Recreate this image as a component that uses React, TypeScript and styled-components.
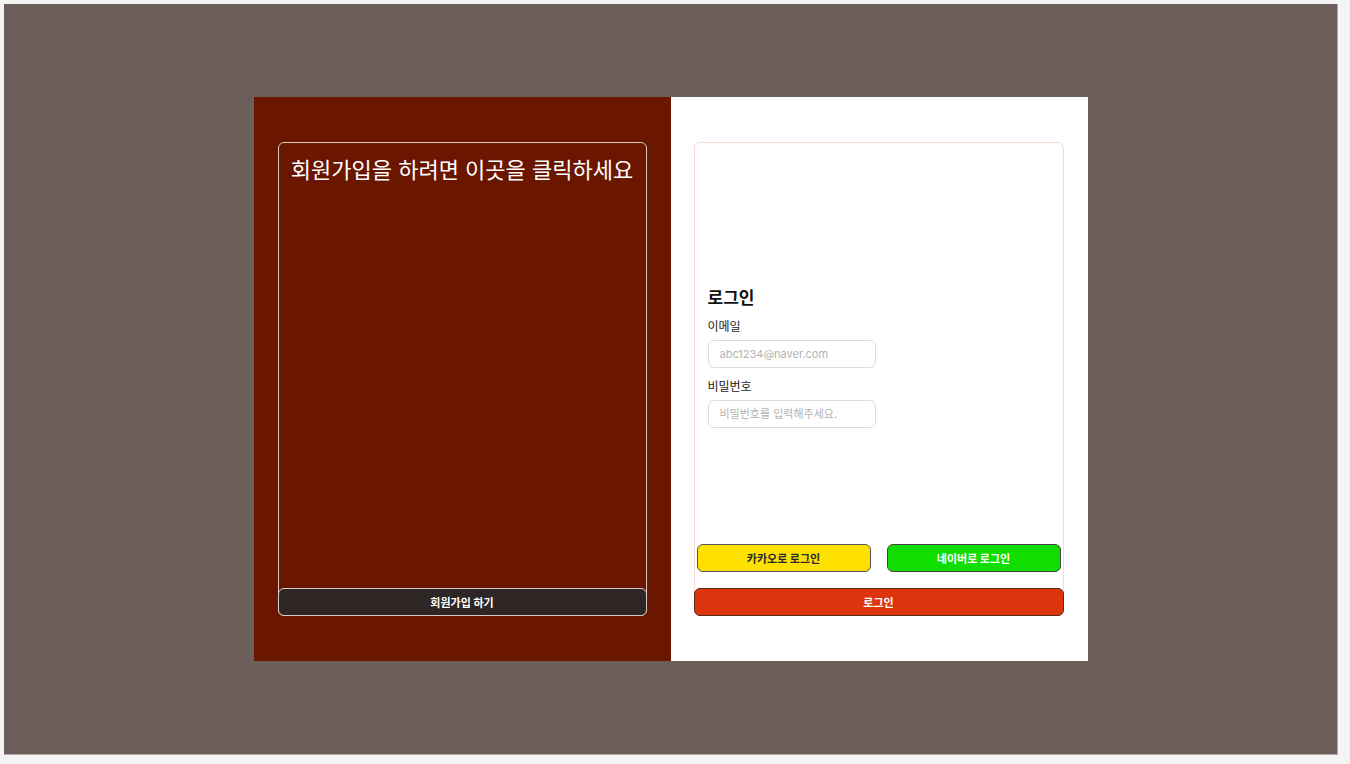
import React from 'react';
import styled, { createGlobalStyle } from 'styled-components';

const colors = {
  page: '#f4f4f4',
  backdrop: '#6b5e5b',
  wine: '#6a1600',
  signupBtn: '#2e2625',
  kakao: '#ffe100',
  naver: '#10dd00',
  login: '#dc350e',
  line: '#dcdcdc',
};

const GlobalStyle = createGlobalStyle`
  html, body {
    margin: 0;
    padding: 0;
    background: ${colors.page};
    font-family: 'Inter', 'Noto Sans CJK KR', sans-serif;
  }
  * {
    box-sizing: border-box;
  }
`;

const Backdrop = styled.div`
  margin: 4px;
  width: 1334px;
  height: 751px;
  background: ${colors.backdrop};
  border-right: 1px solid #b4a9a7;
  border-bottom: 1px solid #b4a9a7;
  display: flex;
  align-items: center;
  justify-content: center;
`;

const Card = styled.div`
  width: 834px;
  height: 564px;
  display: grid;
  grid-template-columns: 417px 417px;
`;

const Half = styled.section<{ $tone: 'dark' | 'light' }>`
  background: ${(p) => (p.$tone === 'dark' ? colors.wine : '#ffffff')};
  padding: 45px 24px 45px ${(p) => (p.$tone === 'dark' ? '24px' : '23px')};
  display: flex;
`;

const Frame = styled.div<{ $border: string }>`
  flex: 1;
  border: 1px solid ${(p) => p.$border};
  border-radius: 6px;
  display: flex;
  flex-direction: column;
`;

const Title = styled.h1`
  margin: 0;
  padding-top: 12px;
  text-align: center;
  font-size: 22px;
  font-weight: 400;
  line-height: 30px;
  color: #ffffff;
  flex: 1;
`;

const BlockButton = styled.button<{ $bg: string; $fg: string; $border: string }>`
  margin: 0 -1px -1px;
  height: 28px;
  border: 1px solid ${(p) => p.$border};
  border-radius: 6px;
  background: ${(p) => p.$bg};
  color: ${(p) => p.$fg};
  font-family: inherit;
  font-size: 11px;
  font-weight: 700;
  cursor: pointer;
`;

const Form = styled.div`
  flex: 1;
  padding: 144px 13px 0;
  display: flex;
  flex-direction: column;
`;

const Heading = styled.h2`
  margin: 0 0 10px;
  font-size: 17px;
  font-weight: 700;
  line-height: 22px;
  color: #111111;
`;

const Label = styled.label`
  font-size: 12px;
  line-height: 16px;
  color: #1a1a1a;
  margin-bottom: 5px;
`;

const Input = styled.input`
  width: 168px;
  height: 28px;
  border: 1px solid ${colors.line};
  border-radius: 6px;
  padding: 0 11px;
  font-family: inherit;
  font-size: 11px;
  outline: none;
  margin-bottom: 11px;
  &::placeholder {
    color: #b3b3b3;
  }
`;

const SocialRow = styled.div`
  display: grid;
  grid-template-columns: 174px 174px;
  justify-content: space-between;
  padding: 0 2px;
  margin-bottom: 16px;
`;

const SocialButton = styled(BlockButton)`
  margin: 0;
`;

export default function App() {
  return (
    <>
      <GlobalStyle />
      <Backdrop>
        <Card>
          <Half $tone="dark">
            <Frame $border="#d9c9c5">
              <Title>회원가입을 하려면 이곳을 클릭하세요</Title>
              <BlockButton $bg={colors.signupBtn} $fg="#ffffff" $border="#d9c9c5">
                회원가입 하기
              </BlockButton>
            </Frame>
          </Half>
          <Half $tone="light">
            <Frame $border="#fbd9d0">
              <Form>
                <Heading>로그인</Heading>
                <Label>이메일</Label>
                <Input placeholder="abc1234@naver.com" />
                <Label>비밀번호</Label>
                <Input type="password" placeholder="비밀번호를 입력해주세요." />
              </Form>
              <SocialRow>
                <SocialButton $bg={colors.kakao} $fg="#2a2a2a" $border="#555555">
                  카카오로 로그인
                </SocialButton>
                <SocialButton $bg={colors.naver} $fg="#ffffff" $border="#444444">
                  네이버로 로그인
                </SocialButton>
              </SocialRow>
              <BlockButton $bg={colors.login} $fg="#ffffff" $border="#5a2a1e">
                로그인
              </BlockButton>
            </Frame>
          </Half>
        </Card>
      </Backdrop>
    </>
  );
}
